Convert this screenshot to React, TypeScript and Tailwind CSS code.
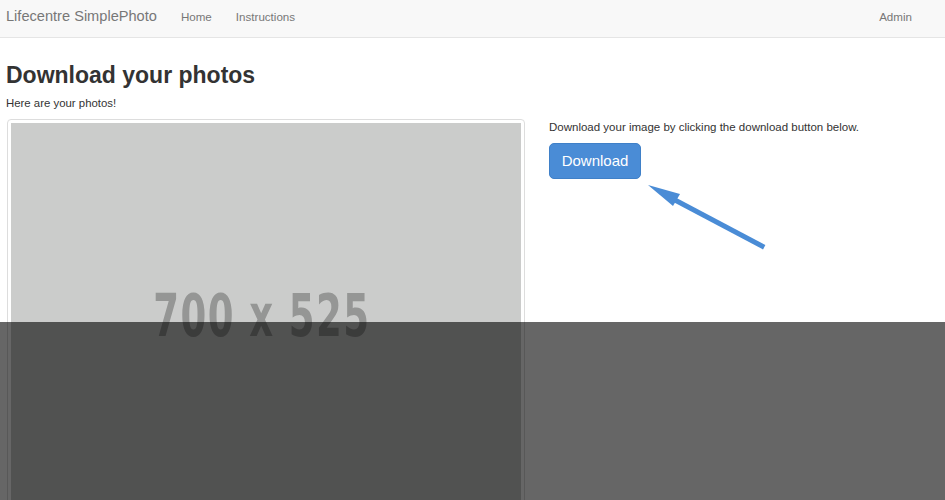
import React from "react";

const font = { fontFamily: '"Liberation Sans", Arial, sans-serif' };

const Navbar: React.FC = () => (
  <div className="flex h-[38px] items-center border-b border-[#e5e5e5] bg-[#f8f8f8] pb-[3px] text-[#777]">
    <span className="ml-[6px] text-[14.6px] text-[#777]">Lifecentre SimplePhoto</span>
    <span className="ml-[24px] text-[11.6px] text-[#777]">Home</span>
    <span className="ml-[24px] text-[11.6px] text-[#777]">Instructions</span>
    <span className="ml-auto mr-[33px] text-[11.6px] text-[#777]">Admin</span>
  </div>
);

const Placeholder: React.FC = () => (
  <div className="ml-[7px] w-[518px] shrink-0 rounded-[4px] border border-[#ddd] p-[3px]">
    <div className="flex h-[383px] w-full items-center justify-center bg-[#cbcccb] pt-[4px] pr-[8px]">
      <span
        className="scale-x-[0.71] text-[58px] font-bold tracking-[2px] text-[#959695]"
        style={{ fontFamily: '"DejaVu Sans Condensed", "Liberation Sans Narrow", sans-serif' }}
      >
        700 x 525
      </span>
    </div>
  </div>
);

const Arrow: React.FC = () => (
  <svg width="140" height="80" viewBox="0 0 140 80" className="ml-[94px] mt-0 block">
    <line x1="119" y1="67" x2="28" y2="19" stroke="#4a8cd6" strokeWidth="5" strokeLinecap="square" />
    <polygon points="5,6 37,15 30,27" fill="#4a8cd6" />
  </svg>
);

const App: React.FC = () => {
  return (
    <div className="relative h-[500px] w-[945px] overflow-hidden bg-white" style={font}>
      <Navbar />
      <h1 className="ml-[6px] mt-[22px] text-[23px] font-bold leading-[30px] text-[#333]">
        Download your photos
      </h1>
      <p className="ml-[6px] mt-[5px] text-[11.4px] text-[#333]">Here are your photos!</p>
      <div className="mt-[7px] flex">
        <Placeholder />
        <div className="ml-[24px]">
          <p className="text-[11.5px] text-[#333]">Download your image by clicking the download button below.</p>
          <button className="mt-[7px] block h-[36px] w-[92px] rounded-[5px] border border-[#3f80c8] bg-[#4a8cd6] text-[15px] text-white">
            Download
          </button>
          <Arrow />
        </div>
      </div>
      <div className="absolute inset-x-0 bottom-0 top-[322px] bg-black/60" />
    </div>
  );
};

export default App;
